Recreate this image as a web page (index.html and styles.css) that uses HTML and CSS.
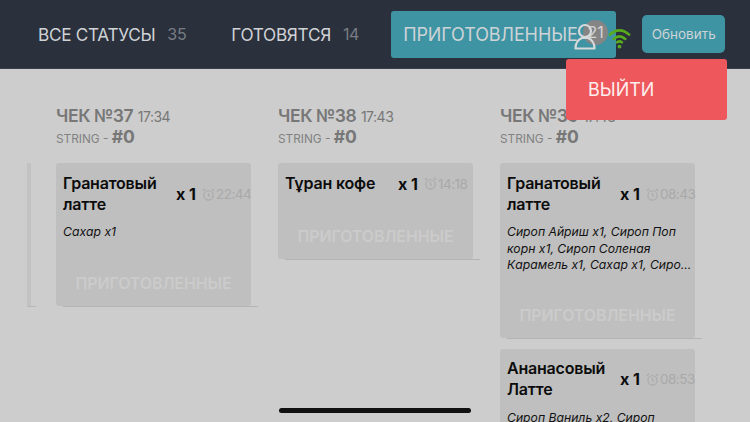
FILE: index.html
```html
<!DOCTYPE html>
<html lang="ru">
<head>
<meta charset="utf-8">
<title>Заказы</title>
<link rel="stylesheet" href="styles.css">
</head>
<body>
<div class="app">
  <header class="top">
    <div class="tab"><span class="tab-name">ВСЕ СТАТУСЫ</span><span class="tab-count">35</span></div>
    <div class="tab tab-second"><span class="tab-name">ГОТОВЯТСЯ</span><span class="tab-count">14</span></div>
    <div class="tab tab-active"><span class="tab-name">ПРИГОТОВЛЕННЫЕ</span><span class="tab-badge">21</span>
      <svg class="user" viewBox="0 0 22 27" width="22" height="27" fill="none" stroke="#d6d9da" stroke-width="2.200" stroke-linejoin="round"><circle cx="11" cy="8" r="6"/><path d="M1.500 25.500c0-6 3-9 6.500-10.500h6c3.500 1.500 6.500 4.500 6.500 10.500z"/></svg>
    </div>
    <svg class="wifi" viewBox="0 0 24 24" width="23" height="23" fill="none" stroke="#58ab1c" stroke-width="2.800" stroke-linecap="round"><path d="M2 9c6-6 14-6 20 0"/><path d="M6 13.500c4-3.600 8-3.600 12 0"/><path d="M9.500 17c2-1.500 3-1.500 5 0"/><circle cx="12" cy="21.500" r="2" fill="#58ab1c" stroke="none"/></svg>
    <button class="refresh">Обновить</button>
  </header>
  <main class="board">
    <div class="rail"></div>
    <section class="col">
      <div class="check"><span class="check-no">ЧЕК №37</span> <span class="check-time">17:34</span></div>
      <div class="sub">STRING - <b class="sub-no">#0</b></div>
      <article class="card card-a">
        <div class="card-head"><div class="name">Гранатовый латте</div><div class="qty">x 1</div><div class="time"><svg class="clock" viewBox="0 0 14 14" width="13" height="13" fill="none" stroke="#a9a9a9" stroke-width="1.200"><circle cx="7" cy="8" r="5"/><path d="M7 5.500V8l1.600 1.200M1 3l2.500-2M13 3l-2.500-2"/></svg>22:44</div></div>
        <p class="mods">Сахар x1</p>
        <div class="status">ПРИГОТОВЛЕННЫЕ</div>
      </article>
    </section>
    <section class="col">
      <div class="check"><span class="check-no">ЧЕК №38</span> <span class="check-time">17:43</span></div>
      <div class="sub">STRING - <b class="sub-no">#0</b></div>
      <article class="card card-b">
        <div class="card-head"><div class="name">Тұран кофе</div><div class="qty">x 1</div><div class="time"><svg class="clock" viewBox="0 0 14 14" width="13" height="13" fill="none" stroke="#a9a9a9" stroke-width="1.200"><circle cx="7" cy="8" r="5"/><path d="M7 5.500V8l1.600 1.200M1 3l2.500-2M13 3l-2.500-2"/></svg>14:18</div></div>
        <div class="status">ПРИГОТОВЛЕННЫЕ</div>
      </article>
    </section>
    <section class="col">
      <div class="check"><span class="check-no">ЧЕК №39</span> <span class="check-time">17:43</span></div>
      <div class="sub">STRING - <b class="sub-no">#0</b></div>
      <article class="card card-c">
        <div class="card-head"><div class="name">Гранатовый латте</div><div class="qty">x 1</div><div class="time"><svg class="clock" viewBox="0 0 14 14" width="13" height="13" fill="none" stroke="#a9a9a9" stroke-width="1.200"><circle cx="7" cy="8" r="5"/><path d="M7 5.500V8l1.600 1.200M1 3l2.500-2M13 3l-2.500-2"/></svg>08:43</div></div>
        <p class="mods">Сироп Айриш x1, Сироп Поп корн x1, Сироп Соленая Карамель x1, Сахар x1, Сиро...</p>
        <div class="status">ПРИГОТОВЛЕННЫЕ</div>
      </article>
      <article class="card card-d">
        <div class="card-head"><div class="name">Ананасовый Латте</div><div class="qty">x 1</div><div class="time"><svg class="clock" viewBox="0 0 14 14" width="13" height="13" fill="none" stroke="#a9a9a9" stroke-width="1.200"><circle cx="7" cy="8" r="5"/><path d="M7 5.500V8l1.600 1.200M1 3l2.500-2M13 3l-2.500-2"/></svg>08:53</div></div>
        <p class="mods">Сироп Ваниль x2, Сироп</p>
      </article>
    </section>
  </main>
  <div class="logout">ВЫЙТИ</div>
  <div class="home"></div>
</div>
</body>
</html>
```
FILE: styles.css
```css
* { box-sizing: border-box; }
html, body { margin: 0; padding: 0; }
body { font-family: "Inter", "Noto Sans", sans-serif; background: #cdcdcd; }
.app { position: relative; width: 750px; height: 422px; overflow: hidden; background: #cdcdcd; }
.top { height: 69px; background: #2a303c; border-bottom: 1px solid #3a4050; display: flex; align-items: center; padding: 0 25px 0 38px; }
.tab { display: flex; flex: none; align-items: center; color: #d0d3d6; font-size: 17.200px; letter-spacing: -0.3px; white-space: nowrap; }
.tab-count { color: #787d85; margin-left: 12px; font-size: 16px; }
.tab-second { margin-left: 45px; }
.tab-active { position: relative; margin-left: 32px; width: 225px; height: 47px; padding-left: 12px; background: #3f94a4; border-radius: 3px; color: #cdd3d6; font-size: 18px; letter-spacing: -0.1px; }
.tab-badge { position: absolute; left: 192px; top: 9px; width: 25px; height: 25px; border-radius: 50%; background: #858585; color: #d6d6d6; font-size: 16px; line-height: 25px; text-align: center; }
.user { position: absolute; left: 183px; top: 12px; }
.wifi { position: relative; flex: none; margin-left: -8px; margin-top: 6px; }
.refresh { flex: none; margin-left: 11px; width: 83px; height: 38px; border: 0; border-radius: 5px; background: #3f94a4; color: #cdd3d6; font: 13.500px "Inter", sans-serif; padding: 0; }
.board { position: relative; display: flex; gap: 27px; padding: 36px 0 0 56px; }
.rail { position: absolute; left: 27px; top: 94px; width: 4px; height: 143px; background: #c2c2c2; }
.rail::after { content: ""; position: absolute; left: 0; bottom: -1px; width: 9px; height: 1px; background: #b8b8ba; }
.col { width: 195px; flex: none; }
.check { color: #777; line-height: 22px; white-space: nowrap; }
.check-no { font-size: 17.500px; font-weight: 600; letter-spacing: -0.4px; }
.check-time { font-size: 14px; letter-spacing: -0.5px; }
.sub { color: #818181; font-size: 11.800px; line-height: 22px; height: 22px; }
.sub-no { color: #777; font-size: 17.500px; font-weight: 700; line-height: 18px; }
.card { position: relative; background: #bfbfbf; border-radius: 3px; padding: 10px 0 0 7px; margin-top: 11px; }
.card::after { content: ""; position: absolute; left: 7px; right: -7px; bottom: -1px; height: 1px; background: #b4b4b8; }
.card-a { height: 143px; margin-top: 13px; }
.card-b { height: 96px; margin-top: 13px; }
.card-c { height: 175px; margin-top: 13px; }
.card-d { height: 100px; padding-top: 9px; }
.card-d .mods { margin-top: 10px; }
.card-d::after { display: none; }
.card-head { display: flex; align-items: center; min-height: 21px; }
.name { width: 113px; flex: none; font-size: 16px; line-height: 21px; font-weight: 600; color: #0c0c0c; letter-spacing: -0.2px; }
.qty { width: 26px; flex: none; font-size: 16px; font-weight: 700; color: #0c0c0c; }
.time { display: flex; align-items: center; gap: 1px; color: #a9a9a9; font-size: 13.500px; letter-spacing: -0.5px; white-space: nowrap; }
.clock { flex: none; }
.mods { margin: 9px 0 0; width: 188px; font-size: 12.200px; line-height: 16.500px; font-style: italic; color: #111; }
.status { position: absolute; left: 0; right: 0; bottom: 13px; text-align: center; color: #cbcbcb; font-size: 16px; font-weight: 600; letter-spacing: -0.1px; }
.logout { position: absolute; left: 566px; top: 59px; width: 161px; height: 61px; background: #ee585c; border-radius: 3px; color: #fdeeee; font-size: 18px; line-height: 61px; padding-left: 22px; }
.home { position: absolute; left: 279px; top: 408px; width: 192px; height: 5px; border-radius: 3px; background: #111; }
```
